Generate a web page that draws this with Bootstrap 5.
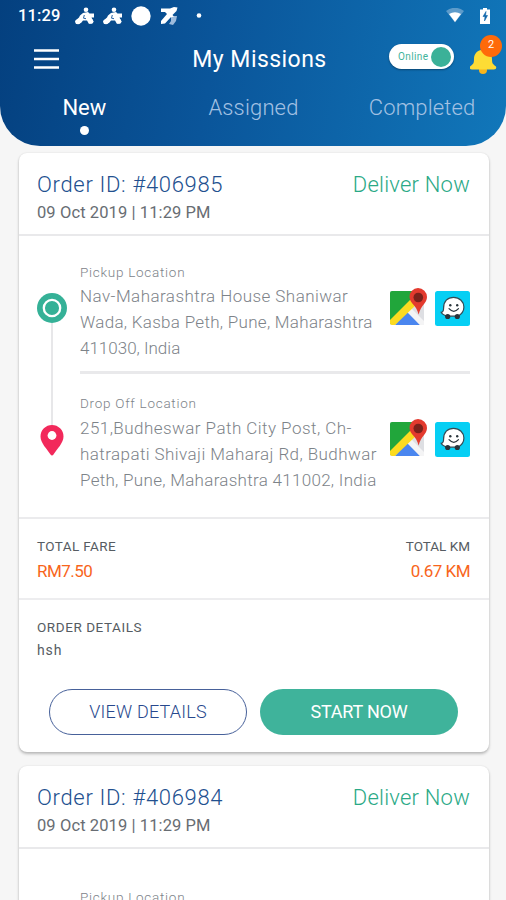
<!DOCTYPE html>
<html lang="en">
<head>
<meta charset="utf-8">
<meta name="viewport" content="width=device-width, initial-scale=1">
<title>My Missions</title>
<link href="https://cdn.jsdelivr.net/npm/bootstrap@5.3.0/dist/css/bootstrap.min.css" rel="stylesheet">
<style>
body{font-family:Roboto,"Liberation Sans",sans-serif;background:#f6f6f6;height:900px;overflow:hidden;font-weight:300}
.app-head{height:146px;background:linear-gradient(100deg,#04407f 0%,#0a559a 42%,#1177ba 100%);border-radius:0 0 40px 40px;color:#fff}
.status{height:31px;padding:0 16px 0 18px}
.clock{font-size:16.5px;font-weight:500;letter-spacing:.1px;width:57px;line-height:32px}
.title-row{height:54px;padding:0 8px 0 34px}
.title{font-size:23px;font-weight:400;letter-spacing:.45px;line-height:30px;margin-right:7px;padding-top:3px}
.side{width:115px}
.side-menu{width:109px;padding-top:2px}
.toggle{width:65px;height:25px;background:#fff;border-radius:13px;box-shadow:0 1px 2px rgba(0,0,0,.35);padding:0 3px 0 9px;color:#3fb39b;font-size:10px;letter-spacing:.4px;margin-top:-3px;font-weight:400}
.knob{width:20px;height:20px;background:#3bb198}
.bell{width:28px;height:40px;margin-top:-1px}
.count{width:22px;height:22px;background:#ff6a0a;font-size:11px;font-weight:400;top:-3px;right:-4px}
.tabs-row{padding-top:8px}
.tab{font-size:22px;line-height:30px;color:#a3c1e3;width:33.333%;text-align:center;letter-spacing:.15px;font-weight:300;padding-left:1px}
.tab.active{color:#fff;font-weight:400;letter-spacing:0;padding-left:0}
.dot{width:9px;height:9px;background:#fff;margin:3px auto 0}
.missions{padding:7px 17px 0 19px;gap:14px}
.mission{border:0;border-radius:8px;box-shadow:0 2px 3px rgba(0,0,0,.24),0 0 2px rgba(0,0,0,.1)}
.m-head{padding:18px 19px 7px 18px;border-bottom:2px solid #e9e9eb;height:83px}
.order-id{font-size:22px;line-height:28px;color:#22508f;letter-spacing:.67px}
.deliver{font-size:22px;line-height:28px;color:#2aa986;letter-spacing:.22px}
.when{font-size:16.5px;line-height:28px;color:#686d73;letter-spacing:.1px;font-weight:400}
.route{padding:24px 19px 24px 18px;border-bottom:2px solid #ebebed;height:283px}
.route-late{padding-top:36px}
.rail{width:30px;margin-right:13px;padding-top:33px;height:196px}
.rail-line{width:2px;background:#e7e7e9}
.stop-label{font-size:13.5px;line-height:24px;color:#7d8389;letter-spacing:.73px}
.addr{font-size:17px;line-height:26px;color:#7d8389;white-space:nowrap;margin-top:-1px}
.addr-drop{margin-top:0}
.a1,.b1{letter-spacing:.45px}
.a2,.b3{letter-spacing:.29px}
.a3{letter-spacing:0}
.b2{letter-spacing:.42px}
.apps{width:80px;padding-top:3px}
.rule{height:3px;background:#e9e9eb;margin:10px 0 17px}
.fare{padding:15px 19px 0 18px;height:81px;border-bottom:2px solid #ededef}
.cap{font-size:13.5px;line-height:24px;color:#565c62;font-weight:400;letter-spacing:0}
.cap-fare{letter-spacing:.4px}
.cap-order{letter-spacing:.56px}
.money{font-size:17px;line-height:26px;color:#f8651b;font-weight:400;letter-spacing:-.52px}
.detail{padding:15px 18px 0;height:152px}
.note{font-size:14px;line-height:23px;color:#565c62;font-weight:400;letter-spacing:.9px}
.acts{padding:0 12px;gap:13px;margin-top:27px}
.act{width:198px;height:46px;border-radius:23px;font-size:18px;font-weight:400;padding:0;line-height:42px;letter-spacing:-.2px}
.act-view{border:1.5px solid #47619a;color:#27488d;background:#fff;font-weight:300;letter-spacing:.2px}
.act-go{background:#3fb39b;color:#fff;border:0}
</style>
</head>
<body>
<svg width="0" height="0" class="d-block">
<defs>
<symbol id="maps" viewBox="0 0 38 40">
<rect x="0" y="4" width="34" height="34" rx="2" fill="#dedfe3"/>
<path d="M0 6a2 2 0 0 1 2-2h28v3L0 37z" fill="#21a63b"/>
<path d="M5 38 17 24 30 38z" fill="#4a86ef"/>
<path d="M17 25 21 21 34 34v4h-4z" fill="#f4f4f5"/>
<path d="M0 33 22 11l5 6L5 38H2q-2 0-2-2z" fill="#fbdb20"/>
<path d="M28 1a9 9 0 0 1 9 9c0 6-6 8-8.400 17.500C26.500 18 19.500 16 19.500 10A8.800 8.800 0 0 1 28 1z" fill="#e33a2e"/>
<circle cx="28.300" cy="10.500" r="4.800" fill="#7c211b"/>
</symbol>
<symbol id="waze" viewBox="0 0 35 35">
<rect width="35" height="35" rx="2.500" fill="#06cff4"/>
<path d="M18.500 6.300c6.200 0 10.400 4.600 10.400 9.700 0 4.500-2.700 7.400-6 9.200H12.500c-3-.7-5.300-2-6.300-3.900 2.200-.3 2.400-1.700 2.400-4.300C8.600 10.500 12.500 6.300 18.500 6.300z" fill="#fff" stroke="#344a54" stroke-width="1.200"/>
<circle cx="12.700" cy="25.500" r="2.600" fill="#29343b"/><circle cx="22.300" cy="25.500" r="2.600" fill="#29343b"/>
<circle cx="15.300" cy="14.200" r="1.200" fill="#29343b"/><circle cx="22.200" cy="14.200" r="1.200" fill="#29343b"/>
<path d="M14 17.700q4.800 5.300 9.500 0" fill="none" stroke="#29343b" stroke-width="1.200" stroke-linecap="round"/>
</symbol>
<symbol id="rider" viewBox="0 0 20 18">
<circle cx="11" cy="2.800" r="2.300"/><path d="M8 6 13 5l1.500 1.500H19v4h-2.500l2 4.500-4.500 2-2-3.500H8L6 16l-5 1-1-3 4-3.500 1-2z"/><circle cx="3" cy="14.800" r="2.500"/><circle cx="16" cy="14.500" r="2.400"/><path d="m9.300 8-.8 3.200 2.500.5" fill="none" stroke="#2864a5" stroke-width="1"/>
</symbol>
</defs>
</svg>

<header class="app-head">
<div class="status d-flex align-items-center">
<span class="clock">11:29</span>
<svg width="20" height="18" fill="#fff"><use href="#rider"/></svg>
<svg class="ms-2" width="20" height="18" fill="#fff"><use href="#rider"/></svg>
<svg class="ms-2" width="20" height="20"><circle cx="10" cy="10" r="9.700" fill="#fff"/></svg>
<svg class="ms-2" width="21" height="20" viewBox="0 0 21 20"><path d="M12 10h6l-1 5-3 4-4-1 2-3z" fill="#9dbbdc"/><path d="M2 2.500h9L15 1l3.500.5-1 3.500-4 4 1.500 1.500-3.500 1-5.500 6-4 .5L2 15l6-7-2-2H2z" fill="#fff"/></svg>
<svg class="ms-3" width="8" height="8"><circle cx="3" cy="3.500" r="2.300" fill="#fff"/></svg>
<svg class="ms-auto me-3" width="18" height="15" viewBox="0 0 18 15"><path d="M0 3q9-6.500 18 0L9 14.500z" fill="#5d9bca"/><path d="M3 6q6-3.500 12 0l-6 8z" fill="#fff"/></svg>
<svg width="10" height="16" viewBox="0 0 10 16"><path d="M3 0h4v1.500h3V16H0V1.500h3z" fill="#fff"/><path d="M6 3.500 3 8.500h2L4.500 13 7.500 7.500H5.500z" fill="#0f67ab" stroke="#0f67ab" stroke-width=".6"/></svg>
</div>
<div class="title-row d-flex align-items-center justify-content-between">
<div class="side-menu"><svg class="d-block" width="25" height="22"><path d="M0 2.500h25M0 11h25M0 19.500h25" stroke="#fff" stroke-width="2.400"/></svg></div>
<div class="title text-nowrap">My Missions</div>
<div class="side d-flex align-items-center justify-content-end">
<div class="toggle flex-shrink-0 d-flex align-items-center justify-content-between"><span>Online</span><span class="knob rounded-circle"></span></div>
<div class="bell flex-shrink-0 position-relative ms-3">
<svg class="d-block" width="28" height="40" viewBox="0 0 28 40"><circle cx="13" cy="32" r="4" fill="#f7b51d"/><path d="M11 12a2 2 0 0 1 4 0c5 1 7 5 7 9 0 5 1 5 4 7.500q1 3-2 3H2q-3 0-2-3c3-2.500 4-2.500 4-7.500 0-4 2-8 7-9z" fill="#fddc35"/></svg>
<span class="count position-absolute rounded-circle d-flex align-items-center justify-content-center">2</span>
</div>
</div>
</div>
<nav class="tabs-row d-flex">
<div class="tab active">New<div class="dot rounded-circle"></div></div>
<div class="tab">Assigned</div>
<div class="tab">Completed</div>
</nav>
</header>

<main class="missions d-flex flex-column">
<article class="mission card">
<div class="m-head"><div class="d-flex justify-content-between"><span class="order-id">Order ID: #406985</span><span class="deliver">Deliver Now</span></div><div class="when">09 Oct 2019 | 11:29 PM</div></div>
<div class="route d-flex">
<div class="rail d-flex flex-column align-items-center">
<svg class="flex-shrink-0" width="30" height="30"><circle cx="15" cy="15" r="15" fill="#35b197"/><circle cx="15" cy="15" r="8.200" fill="#35b197" stroke="#fff" stroke-width="2.300"/></svg>
<div class="rail-line flex-grow-1"></div>
<svg class="flex-shrink-0" width="24" height="31" viewBox="0 0 24 31"><path d="M12 0a11.500 11.500 0 0 1 11.500 11.500C23.500 18 17 24 13.500 29.500q-1.500 2-3 0C7 24 .5 18 .5 11.500A11.500 11.500 0 0 1 12 0z" fill="#f2295b"/><circle cx="12" cy="10.500" r="4.400" fill="#fff"/></svg>
</div>
<div class="flex-grow-1">
<div class="stop-label">Pickup Location</div>
<div class="d-flex justify-content-between">
<div class="addr"><span class="a1">Nav-Maharashtra House Shaniwar</span><br><span class="a2">Wada, Kasba Peth, Pune, Maharashtra</span><br><span class="a3">411030, India</span></div>
<div class="apps d-flex justify-content-between align-items-start"><svg width="38" height="40"><use href="#maps"/></svg><svg class="mt-1" width="35" height="35"><use href="#waze"/></svg></div>
</div>
<div class="rule"></div>
<div class="stop-label">Drop Off Location</div>
<div class="d-flex justify-content-between">
<div class="addr addr-drop"><span class="b1">251,Budheswar Path City Post, Ch-</span><br><span class="b2">hatrapati Shivaji Maharaj Rd, Budhwar</span><br><span class="b3">Peth, Pune, Maharashtra 411002, India</span></div>
<div class="apps d-flex justify-content-between align-items-start"><svg width="38" height="40"><use href="#maps"/></svg><svg class="mt-1" width="35" height="35"><use href="#waze"/></svg></div>
</div>
</div>
</div>
<div class="fare d-flex justify-content-between">
<div><div class="cap cap-fare">TOTAL FARE</div><div class="money">RM7.50</div></div>
<div class="text-end"><div class="cap">TOTAL KM</div><div class="money">0.67 KM</div></div>
</div>
<div class="detail">
<div class="cap cap-order">ORDER DETAILS</div>
<div class="note">hsh</div>
<div class="acts d-flex"><button class="act act-view btn">VIEW DETAILS</button><button class="act act-go btn">START NOW</button></div>
</div>
</article>
<article class="mission card">
<div class="m-head"><div class="d-flex justify-content-between"><span class="order-id">Order ID: #406984</span><span class="deliver">Deliver Now</span></div><div class="when">09 Oct 2019 | 11:29 PM</div></div>
<div class="route route-late d-flex"><div class="rail"></div><div class="stop-label">Pickup Location</div></div>
</article>
</main>
<script src="https://cdn.jsdelivr.net/npm/bootstrap@5.3.0/dist/js/bootstrap.bundle.min.js"></script>
</body>
</html>
